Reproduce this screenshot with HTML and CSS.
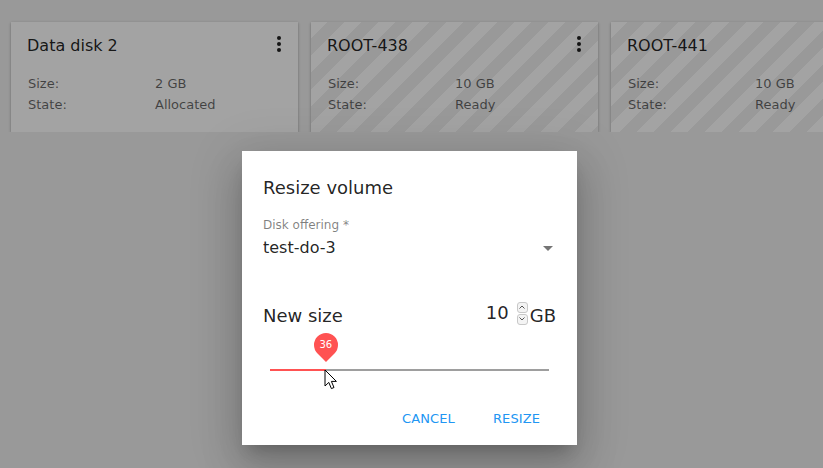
FILE: index.html
```html
<!DOCTYPE html>
<html>
<head>
<meta charset="utf-8">
<link rel="stylesheet" href="styles.css">
</head>
<body>
<div class="cards">
  <div class="card">
    <div class="card-head">
      <div class="card-title">Data disk 2</div>
      <div class="kebab"><span></span><span></span><span></span></div>
    </div>
    <div class="props">
      <div class="lbl">Size:</div><div class="val">2 GB</div>
      <div class="lbl">State:</div><div class="val">Allocated</div>
    </div>
  </div>
  <div class="card striped">
    <div class="card-head">
      <div class="card-title">ROOT-438</div>
      <div class="kebab"><span></span><span></span><span></span></div>
    </div>
    <div class="props">
      <div class="lbl">Size:</div><div class="val">10 GB</div>
      <div class="lbl">State:</div><div class="val">Ready</div>
    </div>
  </div>
  <div class="card striped">
    <div class="card-head">
      <div class="card-title">ROOT-441</div>
      <div class="kebab"><span></span><span></span><span></span></div>
    </div>
    <div class="props">
      <div class="lbl">Size:</div><div class="val">10 GB</div>
      <div class="lbl">State:</div><div class="val">Ready</div>
    </div>
  </div>
</div>

<div class="backdrop">
  <div class="dialog">
    <div class="dlg-title">Resize volume</div>
    <div class="field">
      <div class="field-label">Disk offering *</div>
      <div class="select">
        <span>test-do-3</span>
        <span class="caret"></span>
      </div>
    </div>
    <div class="size-row">
      <div class="size-label">New size</div>
      <div class="size-input">
        <span class="num">10</span>
        <span class="spin">
          <span class="spin-btn"><svg width="8" height="6" viewBox="0 0 8 6"><path d="M1.5 4.5 L4 2 L6.5 4.5" fill="none" stroke="#555" stroke-width="1"/></svg></span>
          <span class="spin-btn"><svg width="8" height="6" viewBox="0 0 8 6"><path d="M1.5 1.5 L4 4 L6.5 1.5" fill="none" stroke="#555" stroke-width="1"/></svg></span>
        </span>
        <span class="unit">GB</span>
      </div>
    </div>
    <div class="slider">
      <div class="track">
        <div class="fill" style="width: 20%"></div>
        <div class="thumb" style="left: 20%">
          <div class="pin"></div>
          <div class="pin-text">36</div>
        </div>
      </div>
    </div>
    <div class="actions">
      <button class="btn">CANCEL</button>
      <button class="btn">RESIZE</button>
    </div>
  </div>
</div>

<svg class="cursor" width="14" height="22" viewBox="0 0 14 22">
  <path d="M1 1 L1 17 L4.8 13.4 L7.4 19.6 L10 18.5 L7.4 12.4 L12.4 12.4 Z" fill="#fff" stroke="#000" stroke-width="1" stroke-linejoin="round"/>
</svg>
</body>
</html>
```

FILE: styles.css
```css
* { box-sizing: border-box; }
html, body { margin: 0; padding: 0; }
body {
  width: 823px;
  height: 468px;
  overflow: hidden;
  background: #f0f0f0;
  font-family: "DejaVu Sans", sans-serif;
  position: relative;
}
.cards {
  display: flex;
  gap: 13px;
  padding: 22px 0 0 11px;
  overflow: hidden;
}
.card {
  flex: 0 0 287px;
  height: 110px;
  background: #fff;
  box-shadow: 0 1px 3px rgba(0,0,0,0.25), 0 1px 1px rgba(0,0,0,0.15);
  padding: 14px 16px 0 16px;
}
.card.striped {
  background: repeating-linear-gradient(135deg, #ffffff 0px, #ffffff 12px, #f0f0f0 12px, #f0f0f0 24px);
}
.card-head {
  display: flex;
  justify-content: space-between;
  align-items: flex-start;
}
.card-title {
  font-size: 16px;
  line-height: 20px;
  color: rgba(0,0,0,0.87);
}
.kebab {
  display: flex;
  flex-direction: column;
  gap: 2px;
  margin-right: 1px;
}
.kebab span {
  width: 4px; height: 4px;
  border-radius: 50%;
  background: rgba(0,0,0,0.87);
}
.props {
  margin-top: 17px;
  display: grid;
  grid-template-columns: 127px 1fr;
  font-size: 13px;
  line-height: 21px;
  color: rgba(0,0,0,0.6);
  padding-left: 1px;
}
.backdrop {
  position: absolute;
  inset: 0;
  background: rgba(0,0,0,0.36);
  padding: 151px 0 0 242px;
}
.dialog {
  width: 335px;
  height: 294px;
  background: #fff;
  box-shadow: 0 11px 15px -7px rgba(0,0,0,0.2), 0 24px 38px 3px rgba(0,0,0,0.14), 0 9px 46px 8px rgba(0,0,0,0.12);
  padding: 25px 21px 0 21px;
  display: flex;
  flex-direction: column;
}
.dlg-title {
  font-size: 18px;
  line-height: 24px;
  color: rgba(0,0,0,0.87);
}
.field { margin-top: 18px; }
.field-label {
  font-size: 12px;
  line-height: 14px;
  color: rgba(0,0,0,0.5);
}
.select {
  display: flex;
  justify-content: space-between;
  align-items: center;
  font-size: 16px;
  line-height: 22px;
  color: rgba(0,0,0,0.87);
  padding-right: 3px;
  margin-top: 5px;
}
.caret {
  width: 0; height: 0;
  border-left: 5px solid transparent;
  border-right: 5px solid transparent;
  border-top: 5px solid rgba(0,0,0,0.54);
}
.size-row {
  margin-top: 45px;
  display: flex;
  justify-content: space-between;
  align-items: flex-end;
}
.size-label {
  font-size: 18px;
  line-height: 24px;
  color: rgba(0,0,0,0.87);
}
.size-input {
  display: flex;
  align-items: center;
  font-size: 18px;
  line-height: 24px;
  color: rgba(0,0,0,0.87);
}
.num { margin-right: 8px; position: relative; top: -3px; }
.spin {
  display: flex;
  flex-direction: column;
  gap: 1px;
  position: relative;
  top: -3px;
}
.spin-btn {
  width: 11px; height: 11px;
  border: 1px solid #c8c8c8;
  border-radius: 3px;
  background: #f4f4f4;
  display: flex; align-items: center; justify-content: center;
}
.unit { margin-left: 2px; }
.slider {
  padding: 0 7px;
  margin-top: 41px;
}
.track {
  position: relative;
  height: 2px;
  background: #9e9e9e;
}
.fill {
  height: 2px;
  background: #ff5252;
}
.thumb {
  position: absolute;
  top: 0;
}
.pin {
  position: absolute;
  width: 24px; height: 24px;
  left: -12px; top: -36px;
  background: #ff5252;
  border-radius: 50% 50% 50% 0;
  transform: rotate(-45deg);
}
.pin-text {
  position: absolute;
  left: -12px; top: -36px;
  width: 24px; height: 24px;
  line-height: 24px;
  text-align: center;
  color: #fff;
  font-size: 10px;
}
.actions {
  margin-top: 29px;
  display: flex;
  justify-content: flex-end;
  gap: 6px;
  margin-right: 0;
}
.btn {
  font-family: "DejaVu Sans", sans-serif;
  font-size: 13px;
  color: #2196f3;
  background: none;
  border: none;
  padding: 0 16px;
  height: 36px;
  letter-spacing: 0.1px;
}
.cursor {
  position: absolute;
  left: 324px;
  top: 369px;
}
```
